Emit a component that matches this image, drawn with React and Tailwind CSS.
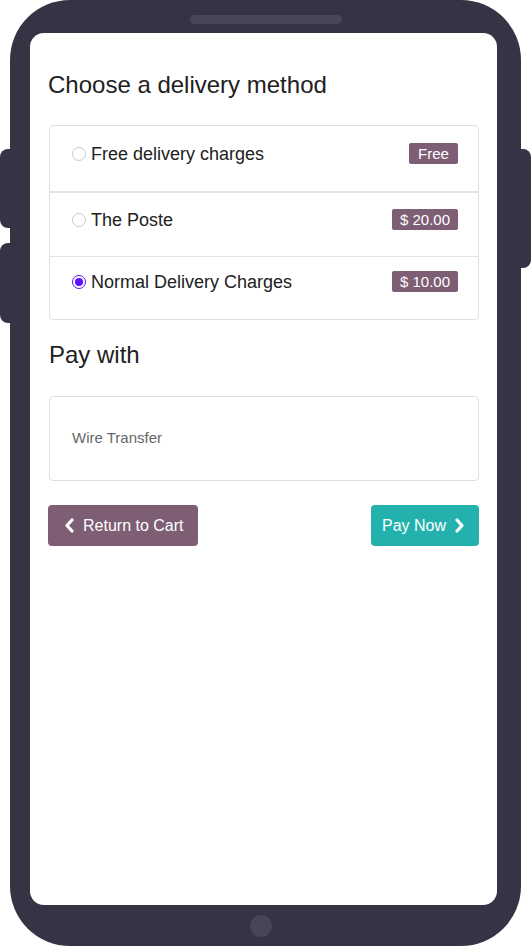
import React from 'react';

function Radio({ checked }) {
  if (checked) {
    return (
      <span className="flex items-center justify-center w-[14px] h-[14px] rounded-full border-[1.5px] border-[#5a12ff] bg-white shrink-0">
        <span className="w-[8px] h-[8px] rounded-full bg-[#5a12ff]" />
      </span>
    );
  }
  return <span className="w-[14px] h-[14px] rounded-full border border-[#c9c9c9] bg-white shrink-0" />;
}

function Chevron({ dir }) {
  return (
    <svg width="11" height="15" viewBox="0 0 11 15" className="shrink-0">
      <polyline
        points={dir === 'left' ? '8,2 3,7.5 8,13' : '3,2 8,7.5 3,13'}
        fill="none"
        stroke="white"
        strokeWidth="3.2"
        strokeLinecap="round"
        strokeLinejoin="round"
      />
    </svg>
  );
}

const methods = [
  { name: 'Free delivery charges', price: 'Free', checked: false, row: 'h-[65px] pt-[17px]' },
  { name: 'The Poste', price: '$ 20.00', checked: false, row: 'h-[65px] pt-[16px] border-t-2 border-[#e3e3e3]' },
  { name: 'Normal Delivery Charges', price: '$ 10.00', checked: true, row: 'h-[63px] pt-[14px] border-t border-[#e3e3e3]' },
];

export default function App() {
  return (
    <div className="relative w-[531px] h-[946px] bg-white overflow-hidden font-['Liberation_Sans',Arimo,sans-serif]">
      {/* side buttons */}
      <div className="absolute left-0 top-[149px] w-[12px] h-[79px] rounded-l-[8px] bg-[#363444]" />
      <div className="absolute left-0 top-[243px] w-[12px] h-[80px] rounded-l-[8px] bg-[#363444]" />
      <div className="absolute right-0 top-[149px] w-[12px] h-[119px] rounded-r-[8px] bg-[#363444]" />

      <div className="relative mx-[10px] h-[946px] rounded-[60px] bg-[#363444] pt-[33px] pl-[20px] pr-[24px]">
        <div className="absolute left-[180px] top-[15px] w-[152px] h-[9px] rounded-full bg-[#474659]" />
        <div className="absolute left-[240px] top-[915px] w-[22px] h-[22px] rounded-full bg-[#474659]" />

        <div className="h-[872px] bg-white rounded-[14px] pt-[38px] pl-[19px]">
          <h2 className="text-[24px] leading-[28px] text-[#212121] -ml-[1px]">Choose a delivery method</h2>

          <div className="mt-[26px] w-[430px] border border-[#e0e0e0] rounded-[4px]">
            {methods.map((m) => (
              <div key={m.name} className={`flex items-start justify-between pl-[22px] pr-[20px] ${m.row}`}>
                <div className="flex items-center gap-[5px] h-[22px]">
                  <Radio checked={m.checked} />
                  <span className="text-[18px] leading-[22px] text-[#212121]">{m.name}</span>
                </div>
                <span className="h-[21px] min-w-[49px] px-[8px] text-center rounded-[2px] bg-[#7d5e74] text-white text-[15px] leading-[21px]">
                  {m.price}
                </span>
              </div>
            ))}
          </div>

          <h2 className="mt-[21px] text-[24px] leading-[28px] text-[#212121]">Pay with</h2>

          <div className="mt-[27px] w-[430px] h-[85px] border border-[#e0e0e0] rounded-[4px] pl-[22px] pt-[29px]">
            <span className="text-[15px] leading-[18px] text-[#666666]">Wire Transfer</span>
          </div>

          <div className="mt-[24px] w-[430px] flex justify-between">
            <button className="h-[41px] -ml-[1px] pl-[16px] pr-[15px] flex items-center gap-[8px] rounded-[4px] bg-[#7d5e74] text-white text-[16px]">
              <Chevron dir="left" />
              <span>Return to Cart</span>
            </button>
            <button className="h-[41px] pl-[11px] pr-[14px] flex items-center gap-[8px] rounded-[4px] bg-[#23b1ad] text-white text-[16px]">
              <span>Pay Now</span>
              <Chevron dir="right" />
            </button>
          </div>
        </div>
      </div>
    </div>
  );
}
